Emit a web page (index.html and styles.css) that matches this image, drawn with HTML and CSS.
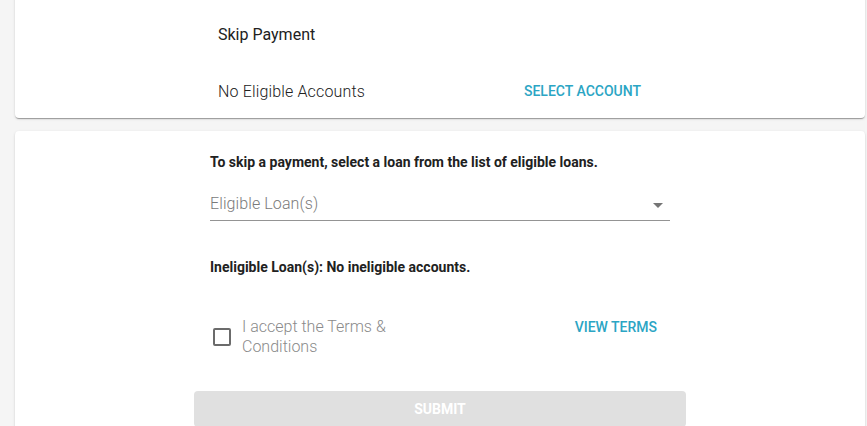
FILE: index.html
```html
<!DOCTYPE html>
<html>
<head>
<meta charset="utf-8">
<link rel="stylesheet" href="styles.css">
</head>
<body>
<div class="page">
  <section class="card card-top">
    <div class="col">
      <div class="row title">Skip Payment</div>
      <div class="row split">
        <span class="muted-text">No Eligible Accounts</span>
        <button class="text-btn select-btn">SELECT ACCOUNT</button>
      </div>
    </div>
  </section>
  <section class="card card-form">
    <div class="col form-col">
      <p class="note">To skip a payment, select a loan from the list of eligible loans.</p>
      <div class="select-field">
        <span class="placeholder">Eligible Loan(s)</span>
        <span class="arrow"></span>
      </div>
      <p class="note ineligible">Ineligible Loan(s): No ineligible accounts.</p>
      <div class="terms-row">
        <label class="check">
          <span class="box"></span>
          <span class="check-label">I accept the Terms &amp; Conditions</span>
        </label>
        <button class="text-btn terms-btn">VIEW TERMS</button>
      </div>
      <button class="submit" disabled>SUBMIT</button>
    </div>
  </section>
</div>
</body>
</html>
```
FILE: styles.css
```css
* { box-sizing: border-box; }
html, body { margin: 0; padding: 0; }
body {
  background: #f5f5f5;
  font-family: Roboto, "Noto Sans", sans-serif;
  color: #212121;
  overflow: hidden;
  height: 426px;
}
.page {
  padding: 0 2px 0 15px;
  display: flex;
  flex-direction: column;
  gap: 13px;
  margin-top: -10px;
}
.card {
  background: #fff;
  border-radius: 4px;
  box-shadow: 0 2px 1px -1px rgba(0,0,0,0.2), 0 1px 1px 0 rgba(0,0,0,0.14), 0 1px 3px 0 rgba(0,0,0,0.12);
}
.col {
  width: 460px;
  margin: 0 auto;
}
.card-top { padding: 33px 0 9px; }
.card-top .col { display: flex; flex-direction: column; gap: 26px; }
.row { padding-left: 8px; }
.title { font-size: 16px; line-height: 24px; font-weight: 400; }
.split {
  display: flex;
  align-items: center;
  justify-content: space-between;
  height: 36px;
  padding-right: 13px;
}
.muted-text { font-size: 16px; font-weight: 300; color: #212121; letter-spacing: 0.15px; }
.text-btn {
  border: 0;
  background: transparent;
  font-family: inherit;
  font-size: 14px;
  font-weight: 500;
  color: #2ba5c4;
  padding: 0 16px;
  height: 36px;
  letter-spacing: 0;
  cursor: pointer;
}
.card-form { padding-top: 21px; min-height: 320px; }
.form-col { display: flex; flex-direction: column; }
.note {
  margin: 0;
  font-size: 14px;
  line-height: 20px;
  font-weight: 700;
  color: #212121;
}
.select-field {
  margin-top: 20px;
  display: flex;
  align-items: center;
  justify-content: space-between;
  height: 29px;
  padding-bottom: 4px;
  border-bottom: 1px solid #949494;
}
.placeholder {
  font-size: 16px;
  line-height: 24px;
  font-weight: 300;
  color: #7a7a7a;
  letter-spacing: 0.1px;
}
.arrow {
  width: 0; height: 0;
  border-left: 5px solid transparent;
  border-right: 5px solid transparent;
  border-top: 5px solid #757575;
  margin-right: 7px;
  margin-top: 2px;
}
.ineligible { margin-top: 36px; }
.terms-row {
  margin-top: 40px;
  display: flex;
  align-items: flex-start;
  justify-content: space-between;
}
.check { display: flex; align-items: center; gap: 11px; padding-left: 3px; }
.box {
  width: 18px; height: 18px;
  border: 2px solid #6b6b6b;
  border-radius: 2px;
  flex: none;
}
.check-label {
  width: 170px;
  font-size: 16px;
  line-height: 20px;
  font-weight: 300;
  color: #8a8a8a;
}
.terms-btn { height: 20px; line-height: 20px; margin-right: -3px; }
.submit {
  margin: 34px -16px 0;
  height: 36px;
  border: 0;
  border-radius: 4px;
  background: #e0e0e0;
  color: #fff;
  font-family: inherit;
  font-size: 14px;
  font-weight: 700;
}
```
